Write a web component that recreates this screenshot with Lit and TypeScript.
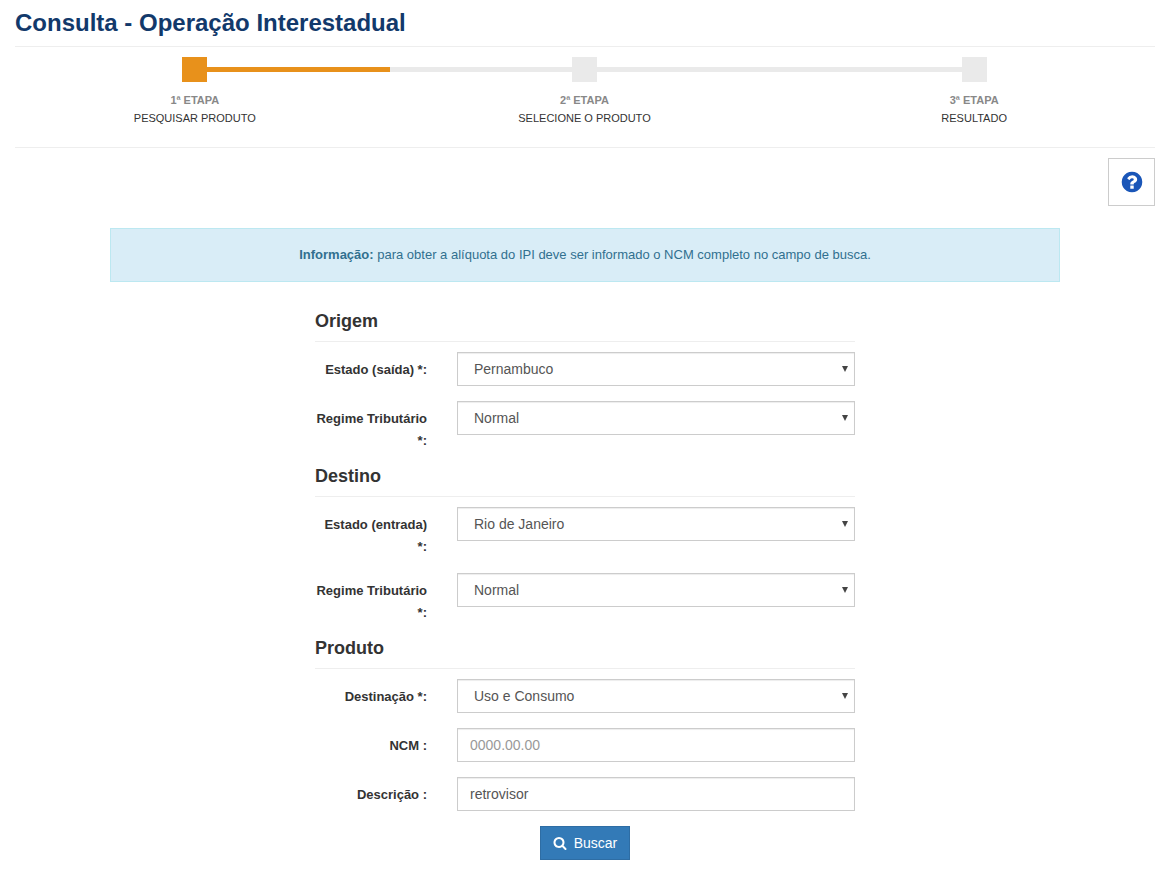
import { LitElement, html, css, svg, nothing } from "lit";
import { customElement, property } from "lit/decorators.js";
import { classMap } from "lit/directives/class-map.js";

interface Step {
  title: string;
  label: string;
  active?: boolean;
}

interface Field {
  id: string;
  label: string;
  kind: "select" | "text";
  value: string;
  options?: string[];
  placeholder?: string;
}

interface Section {
  title: string;
  fields: Field[];
}

const STEPS: Step[] = [
  { title: "1ª ETAPA", label: "PESQUISAR PRODUTO", active: true },
  { title: "2ª ETAPA", label: "SELECIONE O PRODUTO" },
  { title: "3ª ETAPA", label: "RESULTADO" },
];

const SECTIONS: Section[] = [
  {
    title: "Origem",
    fields: [
      { id: "uf-saida", label: "Estado (saída) *:", kind: "select", value: "Pernambuco" },
      { id: "regime-saida", label: "Regime Tributário *:", kind: "select", value: "Normal" },
    ],
  },
  {
    title: "Destino",
    fields: [
      { id: "uf-entrada", label: "Estado (entrada) *:", kind: "select", value: "Rio de Janeiro" },
      { id: "regime-entrada", label: "Regime Tributário *:", kind: "select", value: "Normal" },
    ],
  },
  {
    title: "Produto",
    fields: [
      { id: "destinacao", label: "Destinação *:", kind: "select", value: "Uso e Consumo" },
      { id: "ncm", label: "NCM :", kind: "text", value: "", placeholder: "0000.00.00" },
      { id: "descricao", label: "Descrição :", kind: "text", value: "retrovisor" },
    ],
  },
];

const questionIcon = svg`<path d="M1024 1376v-192q0-14-9-23t-23-9h-192q-14 0-23 9t-9 23v192q0 14 9 23t23 9h192q14 0 23-9t9-23zm256-672q0-88-55.5-163t-138.5-116-170-41q-243 0-371 213-15 24 8 42l132 100q7 6 19 6 16 0 25-12 53-68 86-92 34-24 86-24 48 0 85.5 26t37.5 59q0 38-20 61t-68 45q-63 28-115.5 86.5t-52.5 125.5v36q0 14 9 23t23 9h192q14 0 23-9t9-23q0-19 21.5-49.5t54.5-49.5q32-18 49-28.5t46-35 44.5-48 28-60.5 12.5-81zm384 192q0 209-103 385.5t-279.5 279.5-385.5 103-385.5-103-279.5-279.5-103-385.5 103-385.5 279.5-279.5 385.5-103 385.5 103 279.5 279.5 103 385.5z"/>`;

const searchIcon = svg`<path d="M1216 832q0-185-131.5-316.5t-316.5-131.5-316.5 131.5-131.5 316.5 131.5 316.5 316.5 131.5 316.5-131.5 131.5-316.5zm512 832q0 52-38 90t-90 38q-54 0-90-38l-343-342q-179 124-399 124-143 0-273.5-55.5t-225-150-150-225-55.5-273.5 55.5-273.5 150-225 225-150 273.5-55.5 273.5 55.5 225 150 150 225 55.5 273.5q0 220-124 399l343 343q37 37 37 90z"/>`;

@customElement("step-progress")
export class StepProgress extends LitElement {
  @property({ attribute: false }) steps: Step[] = [];

  static styles = css`
    :host {
      display: block;
    }
    .steps {
      display: grid;
      grid-template-columns: repeat(3, 1fr);
      margin: 0;
      padding: 0;
      list-style: none;
      text-align: center;
      font-size: 11px;
      line-height: 18px;
      color: #333;
    }
    .track {
      display: flex;
      align-items: center;
      margin-bottom: 9px;
    }
    .line {
      flex: 1;
      height: 5px;
      background: #eaeaea;
    }
    .square {
      width: 25px;
      height: 25px;
      background: #eaeaea;
    }
    .step:first-child .line:first-child,
    .step:last-child .line:last-child {
      visibility: hidden;
    }
    .active .line,
    .active .square {
      background: #e8911b;
    }
    .title {
      display: block;
      font-weight: bold;
      color: #888;
    }
  `;

  render() {
    return html`
      <ol class="steps">
        ${this.steps.map(
          (s) => html`
            <li class=${classMap({ step: true, active: !!s.active })}>
              <div class="track">
                <span class="line"></span><span class="square"></span><span class="line"></span>
              </div>
              <span class="title">${s.title}</span>
              <span>${s.label}</span>
            </li>
          `
        )}
      </ol>
    `;
  }
}

@customElement("app-root")
export class AppRoot extends LitElement {
  static styles = css`
    :host {
      display: block;
      box-sizing: border-box;
      padding: 0 14px 12px 15px;
      font-family: "Liberation Sans", Arial, sans-serif;
      font-size: 13px;
      line-height: 22px;
      color: #333;
      background: #fff;
    }
    *,
    *::before {
      box-sizing: border-box;
    }
    .page-title {
      margin: 0;
      padding: 8px 0;
      font-size: 24px;
      line-height: 30px;
      font-weight: bold;
      color: #12396b;
    }
    .progress {
      padding: 10px 0 20px;
      border: solid #eee;
      border-width: 1px 0;
    }
    step-progress {
      margin: 0 -14px 0 -15px;
    }
    .tools {
      display: flex;
      justify-content: flex-end;
      padding: 10px 0 22px;
    }
    .help {
      display: flex;
      align-items: center;
      justify-content: center;
      width: 47px;
      height: 48px;
      padding: 0;
      border: 1px solid #ccc;
      background: #fff;
      cursor: pointer;
    }
    .help svg {
      width: 24px;
      height: 24px;
      fill: #1a56b8;
    }
    .info {
      max-width: 950px;
      margin: 0 auto 30px;
      padding: 15px;
      border: 1px solid #bce8f1;
      background: #d9edf7;
      color: #31708f;
      text-align: center;
    }
    .form {
      max-width: 540px;
      margin: 0 auto;
    }
    .section {
      margin: 0;
      padding: 0;
      border: 0;
      min-width: 0;
    }
    .section-title {
      margin: 0 0 10px;
      padding-bottom: 11px;
      border-bottom: 1px solid #eee;
      font-size: 18px;
      line-height: 18px;
      font-weight: bold;
    }
    .row {
      display: grid;
      grid-template-columns: 112px minmax(0, 1fr);
      column-gap: 30px;
      align-items: start;
      margin-bottom: 15px;
    }
    .row-label {
      padding-top: 7px;
      font-weight: bold;
      text-align: right;
    }
    .select-box {
      display: grid;
      align-items: center;
    }
    .select-box > * {
      grid-area: 1 / 1;
    }
    .arrow {
      justify-self: end;
      width: 6px;
      height: 6px;
      margin-right: 7px;
      fill: #444;
      pointer-events: none;
    }
    .control {
      display: block;
      width: 100%;
      height: 34px;
      margin: 0;
      padding: 6px 12px;
      border: 1px solid #ccc;
      border-radius: 0;
      background: #fff;
      box-shadow: inset 0 1px 1px rgba(0, 0, 0, 0.075);
      font-family: inherit;
      font-size: 14px;
      line-height: 20px;
      color: #555;
      appearance: none;
    }
    .control::placeholder {
      color: #999;
      opacity: 1;
    }
    select.control {
      padding: 6px 16px;
    }
    .actions {
      display: flex;
      justify-content: center;
    }
    .submit {
      display: flex;
      align-items: center;
      gap: 7px;
      height: 34px;
      padding: 0 12px;
      border: 1px solid #2e6da4;
      background: #337ab7;
      color: #fff;
      font-family: inherit;
      font-size: 14px;
      line-height: 20px;
      cursor: pointer;
    }
    .submit svg {
      width: 14px;
      height: 14px;
      fill: currentColor;
    }
  `;

  private control(f: Field) {
    if (f.kind === "select") {
      return html`
        <div class="select-box">
          <select class="control" id=${f.id} name=${f.id}>
            <option selected>${f.value}</option>
          </select>
          <svg class="arrow" viewBox="0 0 6 6" aria-hidden="true"><path d="M0 0h6L3 6z" /></svg>
        </div>
      `;
    }
    return html`<input
      class="control"
      type="text"
      id=${f.id}
      name=${f.id}
      .value=${f.value}
      placeholder=${f.placeholder ?? nothing}
    />`;
  }

  render() {
    return html`
      <h1 class="page-title">Consulta - Operação Interestadual</h1>
      <div class="progress"><step-progress .steps=${STEPS}></step-progress></div>
      <div class="tools">
        <button class="help" type="button" aria-label="Ajuda">
          <svg viewBox="0 0 1792 1792" aria-hidden="true">${questionIcon}</svg>
        </button>
      </div>
      <div class="info">
        <strong>Informação:</strong> para obter a alíquota do IPI deve ser informado o NCM completo
        no campo de busca.
      </div>
      <form class="form" @submit=${(e: Event) => e.preventDefault()}>
        ${SECTIONS.map(
          (s) => html`
            <section class="section">
              <h2 class="section-title">${s.title}</h2>
              ${s.fields.map(
                (f) => html`
                  <div class="row">
                    <label class="row-label" for=${f.id}>${f.label}</label>
                    ${this.control(f)}
                  </div>
                `
              )}
            </section>
          `
        )}
        <div class="actions">
          <button class="submit" type="submit">
            <svg viewBox="0 0 1792 1792" aria-hidden="true">${searchIcon}</svg>
            Buscar
          </button>
        </div>
      </form>
    `;
  }
}
